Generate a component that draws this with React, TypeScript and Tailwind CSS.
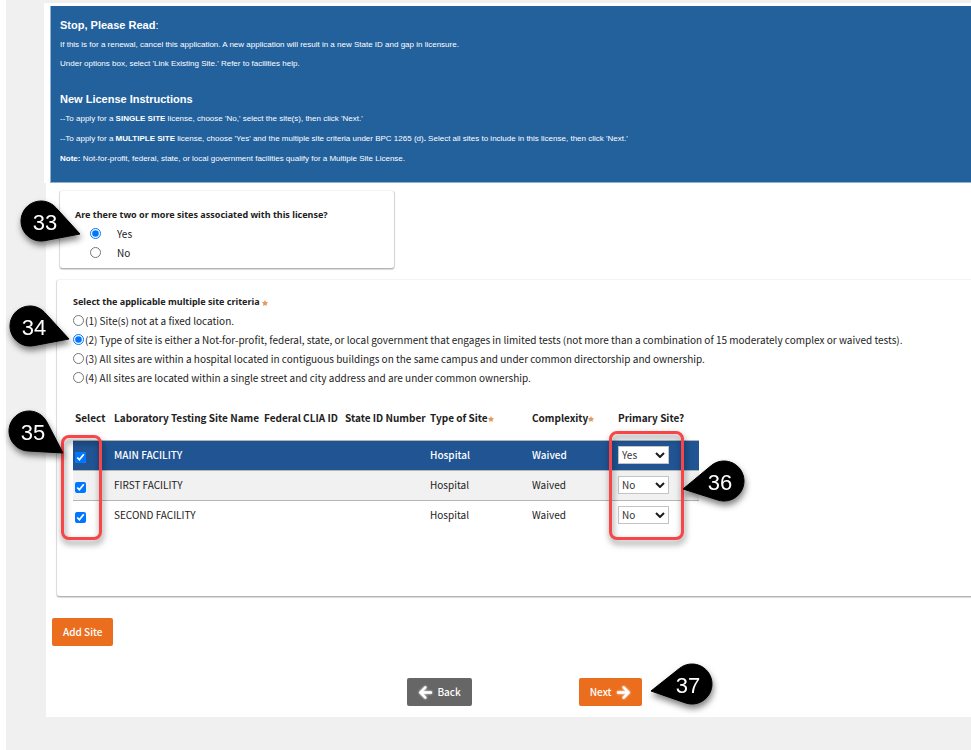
import { useState } from "react";
import type { ReactNode } from "react";
import { clsx } from "clsx";
import { FaArrowLeft, FaArrowRight, FaStar } from "react-icons/fa";

const CRITERIA = [
  "(1) Site(s) not at a fixed location.",
  "(2) Type of site is either a Not-for-profit, federal, state, or local government that engages in limited tests (not more than a combination of 15 moderately complex or waived tests).",
  "(3) All sites are within a hospital located in contiguous buildings on the same campus and under common directorship and ownership.",
  "(4) All sites are located within a single street and city address and are under common ownership.",
];

const COLUMNS = [
  { label: "Select", width: "w-[39px]" },
  { label: "Laboratory Testing Site Name", width: "w-[150px]" },
  { label: "Federal CLIA ID", width: "w-[81px]" },
  { label: "State ID Number", width: "w-[85px]" },
  { label: "Type of Site", width: "w-[102px]", required: true },
  { label: "Complexity", width: "w-[86px]", required: true },
  { label: "Primary Site?", width: "w-[83px]" },
];

const FACILITIES = [
  { name: "MAIN FACILITY", type: "Hospital", complexity: "Waived", primary: "Yes" },
  { name: "FIRST FACILITY", type: "Hospital", complexity: "Waived", primary: "No" },
  { name: "SECOND FACILITY", type: "Hospital", complexity: "Waived", primary: "No" },
];

const legendClass = "font-['Noto_Sans',sans-serif] text-[9px] font-bold";

function Required() {
  return <FaStar className="inline-block text-[#e39a5c]" size={6} aria-label="required" />;
}

/* Teardrop outline: a circle plus the two tangents that meet at the tip */
function teardrop(cx: number, cy: number, tx: number, ty: number) {
  const r = 20;
  const dir = Math.atan2(ty - cy, tx - cx);
  const spread = Math.acos(r / Math.hypot(tx - cx, ty - cy));
  const point = (a: number) => `${cx + r * Math.cos(a)} ${cy + r * Math.sin(a)}`;
  return `M${tx} ${ty}L${point(dir + spread)}A${r} ${r} 0 1 1 ${point(dir - spread)}Z`;
}

type CalloutProps = {
  step: number;
  center: [number, number];
  tip: [number, number];
  className: string;
};

function Callout({ step, center, tip, className }: CalloutProps) {
  return (
    <svg
      width="64"
      height="46"
      viewBox="0 0 64 46"
      className={clsx(
        "pointer-events-none absolute z-20 overflow-visible drop-shadow-[1px_4px_3px_rgba(0,0,0,0.5)]",
        className
      )}
    >
      <path
        d={teardrop(center[0], center[1], tip[0], tip[1])}
        fill="#000"
        stroke="#000"
        strokeLinejoin="round"
      />
      <text
        x={center[0] < 32 ? center[0] + 4 : center[0] - 4}
        y={center[1] + 9}
        textAnchor="middle"
        className="fill-white font-['Liberation_Sans',Arial,sans-serif] text-[22px]"
      >
        {step}
      </text>
    </svg>
  );
}

function Highlight({ className }: { className: string }) {
  return (
    <div
      className={clsx(
        "pointer-events-none absolute z-10 rounded-lg border-3 border-[#f84548] drop-shadow-[1px_4px_3px_rgba(0,0,0,0.5)]",
        className
      )}
    />
  );
}

function Card({ className, children }: { className?: string; children: ReactNode }) {
  return (
    <section
      className={clsx(
        "relative rounded border border-t-[#f4f4f4] border-r-[#d4d4d4] border-b-[#b4b4b4] border-l-[#dcdcdc] bg-white shadow-[0_1px_1px_rgba(0,0,0,0.15)]",
        className
      )}
    >
      {children}
    </section>
  );
}

function Instructions() {
  return (
    <header className="-ml-0.5 bg-white pt-[3px] pl-1.5">
      <div className="h-[177px] border-b border-l border-[#8fb0d0] bg-[#23619d] px-[9px] pt-2.5 font-['Liberation_Sans',Arial,sans-serif] text-[8px] text-white">
        <div className="leading-[19px]">
          <h2 className="text-[11px]">
            <b>Stop, Please Read</b>:
          </h2>
          <p>
            If this is for a renewal, cancel this application. A new application will result in a new
            State ID and gap in licensure.
          </p>
          <p>Under options box, select 'Link Existing Site.' Refer to facilities help.</p>
        </div>
        <div className="mt-4 leading-5">
          <h2 className="text-[11px] font-bold">New License Instructions</h2>
          <p>
            --To apply for a <b>SINGLE SITE</b> license, choose 'No,' select the site(s), then click
            'Next.'
          </p>
          <p>
            --To apply for a <b>MULTIPLE SITE</b> license, choose 'Yes' and the multiple site criteria
            under BPC 1265 (d)<b>.</b> Select all sites to include in this license, then click 'Next.'
          </p>
          <p>
            <b>Note:</b> Not-for-profit, federal, state, or local government facilities qualify for a
            Multiple Site License.
          </p>
        </div>
      </div>
    </header>
  );
}

function MultipleSites() {
  const [answer, setAnswer] = useState("Yes");
  return (
    <Card className="mt-[7px] ml-[13px] w-[336px] px-[15px] pt-3.5 pb-1.5">
      <fieldset className="leading-[19px]">
        <legend className={legendClass}>
          Are there two or more sites associated with this license?
        </legend>
        {["Yes", "No"].map((option) => (
          <label key={option} className="flex items-center gap-4 pl-[15px]">
            <input
              type="radio"
              name="multiple-sites"
              className="size-[11px] accent-[#0075ff]"
              checked={answer === option}
              onChange={() => setAnswer(option)}
            />
            {option}
          </label>
        ))}
      </fieldset>
      <Callout step={33} center={[21, 21]} tip={[60, 34]} className="top-[9px] -left-10" />
    </Card>
  );
}

function PrimarySelect({ name, value }: { name: string; value: string }) {
  return (
    <div className="relative w-[51px]">
      <select
        aria-label={`Primary site: ${name}`}
        defaultValue={value}
        className="block h-[18px] w-full appearance-none border border-[#c4c4c4] bg-white pl-[3px] leading-4 font-normal text-[#333]"
      >
        <option>Yes</option>
        <option>No</option>
      </select>
      <svg
        viewBox="0 0 10 6"
        className="pointer-events-none absolute top-1.5 right-1 h-1.5 w-2.5 fill-none stroke-[#1c1c1c] stroke-2"
      >
        <path d="M1 1l4 4 4-4" />
      </svg>
    </div>
  );
}

function FacilityTable() {
  return (
    <div className="relative mt-[9px] w-[626px]">
      <table className="w-full table-fixed border-collapse text-left">
        <thead>
          <tr className="h-11 leading-4">
            {COLUMNS.map((column) => (
              <th
                key={column.label}
                className={clsx("px-0.5 font-bold whitespace-nowrap", column.width)}
              >
                {column.label}
                {column.required && <Required />}
              </th>
            ))}
          </tr>
        </thead>
        <tbody>
          {FACILITIES.map((facility, i) => (
            <tr
              key={facility.name}
              className={clsx(
                "h-[30px] border-t border-[#b5b5b5] leading-4",
                i === 0 && "bg-[#205493] font-medium text-white",
                i === 1 && "bg-[#f1f1f1]"
              )}
            >
              <td className="px-0.5 pt-1">
                <input
                  type="checkbox"
                  aria-label={`Select ${facility.name}`}
                  defaultChecked
                  className="block size-[11px] accent-[#0075ff]"
                />
              </td>
              <td className="px-0.5">{facility.name}</td>
              <td />
              <td />
              <td className="px-0.5">{facility.type}</td>
              <td className="px-0.5">{facility.complexity}</td>
              <td className="px-0.5">
                <PrimarySelect name={facility.name} value={facility.primary} />
              </td>
            </tr>
          ))}
        </tbody>
      </table>
      <Highlight className="top-[39px] -left-3 h-[105px] w-[41px]" />
      <Highlight className="top-[35px] right-[15px] h-[109px] w-[75px]" />
      <Callout step={35} center={[21, 21]} tip={[55, 43]} className="top-3.5 -left-[65px]" />
      <Callout step={36} center={[42, 21]} tip={[1, 29]} className="top-16 -right-[47px]" />
    </div>
  );
}

function SiteCriteria() {
  const [selected, setSelected] = useState(1);
  return (
    <Card className="mt-2.5 -mr-1 ml-2.5 min-h-[318px] pt-3 pl-4">
      <fieldset className="leading-[19px]">
        <legend className={legendClass}>
          Select the applicable multiple site criteria <Required />
        </legend>
        {CRITERIA.map((text, i) => (
          <label key={text} className="flex items-center gap-px">
            <input
              type="radio"
              name="criteria"
              className="size-[11px] shrink-0 accent-[#0075ff]"
              checked={selected === i}
              onChange={() => setSelected(i)}
            />
            {text}
          </label>
        ))}
      </fieldset>
      <FacilityTable />
      <Callout step={34} center={[21, 21]} tip={[60, 34]} className="top-[25px] -left-12" />
    </Card>
  );
}

const buttonClass =
  "flex h-7 items-center rounded-xs text-white leading-4 font-medium whitespace-nowrap";

export default function App() {
  return (
    <div className="min-h-screen overflow-hidden bg-white pl-1.5 font-['Noto_Sans_CJK_SC','Noto_Sans',sans-serif] text-[10px] text-[#222]">
      <div className="min-h-screen bg-[#f0f0f0] pt-[3px] pl-10">
        <main className="bg-white pb-[11px]">
          <Instructions />
          <MultipleSites />
          <SiteCriteria />
          <button type="button" className={clsx(buttonClass, "mt-[21px] ml-1.5 bg-[#eb6e1f] px-[11px]")}>
            Add Site
          </button>
          <div className="mt-8 flex justify-center gap-[107px] pl-8">
            <button type="button" className={clsx(buttonClass, "gap-1 bg-[#666] px-[11px]")}>
              <FaArrowLeft size={15} className="drop-shadow-[0_0_1px_#fff]" />
              Back
            </button>
            <div className="relative">
              <button type="button" className={clsx(buttonClass, "gap-1 bg-[#eb6e1f] px-[11px]")}>
                Next
                <FaArrowRight size={15} className="drop-shadow-[0_0_1px_#fff]" />
              </button>
              <Callout step={37} center={[42, 21]} tip={[1, 28]} className="-top-[15px] left-[71px]" />
            </div>
          </div>
        </main>
      </div>
    </div>
  );
}
